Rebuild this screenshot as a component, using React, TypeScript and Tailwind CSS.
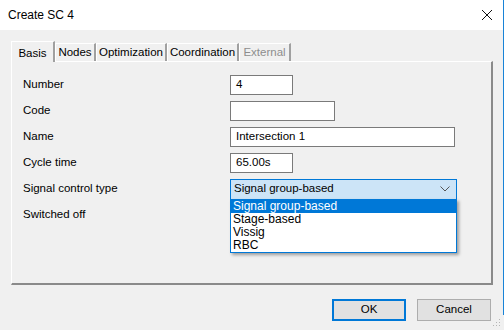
import React from 'react';

const font = { fontFamily: '"Liberation Sans", Arial, sans-serif' };

const tabs = [
  { label: 'Basis', w: 'w-[44px]', active: true },
  { label: 'Nodes', w: 'w-[41px]' },
  { label: 'Optimization', w: 'w-[71px]' },
  { label: 'Coordination', w: 'w-[72px]' },
  { label: 'External', w: 'w-[52px]', disabled: true },
];

function TextBox({ value, width }: { value: string; width: string }) {
  return (
    <div className={`${width} h-[20px] border border-[#7a7a7a] bg-white pl-[5px] flex items-center text-[11.5px] text-black`}>
      {value}
    </div>
  );
}

function Row({ label, children }: { label: string; children?: React.ReactNode }) {
  return (
    <div className="flex items-center h-[26px]">
      <div className="w-[207px] text-[11.5px] text-black">{label}</div>
      {children}
    </div>
  );
}

export default function App() {
  return (
    <div className="relative w-[504px] h-[330px] bg-[#f0f0f0] overflow-hidden flex flex-col" style={font}>
      {/* title bar */}
      <div className="h-[30px] bg-white flex items-center justify-between pl-[8px] pr-[10px]">
        <span className="text-[12px] text-black">Create SC 4</span>
        <svg width="12" height="12" viewBox="0 0 12 12" className="mr-[1px]">
          <path d="M1 1 L11 11 M11 1 L1 11" stroke="#111" strokeWidth="1" />
        </svg>
      </div>

      <div className="flex-1 px-[11px] pt-[11px]">
        {/* tabs */}
        <div className="flex items-end h-[20px]">
          {tabs.map((t) =>
            t.active ? (
              <div
                key={t.label}
                className={`${t.w} relative z-10 h-[21px] -mb-[1px] pt-[3px] text-center bg-[#f0f0f0] border-t border-l border-white border-r-2 border-r-[#a0a0a0] text-[11.5px] text-black`}
              >
                {t.label}
              </div>
            ) : (
              <div
                key={t.label}
                className={`${t.w} h-[18px] flex items-center justify-center bg-[#f0f0f0] border-t border-l border-white border-r-2 border-r-[#a0a0a0] text-[11.5px] ${t.disabled ? 'text-[#8d8d8d]' : 'text-black'}`}
              >
                {t.label}
              </div>
            )
          )}
        </div>

        {/* panel */}
        <div className="h-[224px] border-t border-l border-white border-r-2 border-b-2 border-r-[#8a8a8a] border-b-[#8a8a8a] pl-[11px] pt-[10px]">
          <Row label="Number">
            <TextBox value="4" width="w-[63px]" />
          </Row>
          <Row label="Code">
            <TextBox value="" width="w-[105px]" />
          </Row>
          <Row label="Name">
            <TextBox value="Intersection 1" width="w-[225px]" />
          </Row>
          <Row label="Cycle time">
            <TextBox value="65.00s" width="w-[63px]" />
          </Row>
          <Row label="Signal control type">
            <div className="w-[227px] h-[21px] border border-[#0078d7] bg-[#cce4f7] pl-[3px] pr-[6px] flex items-center justify-between text-[11.5px] text-black">
              <span>Signal group-based</span>
              <svg width="10" height="6" viewBox="0 0 10 6">
                <path d="M0.5 0.5 L5 5 L9.5 0.5" fill="none" stroke="#555" strokeWidth="1" />
              </svg>
            </div>
          </Row>
          <Row label="Switched off" />
        </div>

        {/* buttons */}
        <div className="flex justify-end gap-[11px] pt-[14px] pr-[2px]">
          <button className="w-[74px] h-[22px] border-2 border-[#0078d7] bg-[#e1e1e1] text-[11.5px] text-black flex items-center justify-center">
            OK
          </button>
          <button className="w-[74px] h-[22px] border border-[#adadad] bg-[#e1e1e1] text-[11.5px] text-black flex items-center justify-center">
            Cancel
          </button>
        </div>
      </div>

      {/* open dropdown list */}
      <div className="absolute left-[230px] top-[199px] w-[227px] border border-[#0078d7] bg-white shadow-[2px_2px_3px_rgba(0,0,0,0.35)] text-[12px] leading-[13px] text-black">
        <div className="bg-[#0078d7] text-white pl-[2px]">Signal group-based</div>
        <div className="pl-[2px]">Stage-based</div>
        <div className="pl-[2px]">Vissig</div>
        <div className="pl-[2px]">RBC</div>
      </div>

      {/* window edge */}
      <div className="absolute right-0 top-0 w-[1px] h-[315px] bg-[#1883d7]" />

      {/* size grip */}
      <svg className="absolute right-[3px] bottom-[3px]" width="8" height="8" viewBox="0 0 8 8">
        <rect x="6" y="0" width="1" height="1" fill="#b5b5b5" />
        <rect x="3" y="3" width="1" height="1" fill="#b5b5b5" />
        <rect x="6" y="3" width="1" height="1" fill="#b5b5b5" />
        <rect x="0" y="6" width="1" height="1" fill="#b5b5b5" />
        <rect x="3" y="6" width="1" height="1" fill="#b5b5b5" />
        <rect x="6" y="6" width="1" height="1" fill="#b5b5b5" />
      </svg>
    </div>
  );
}
